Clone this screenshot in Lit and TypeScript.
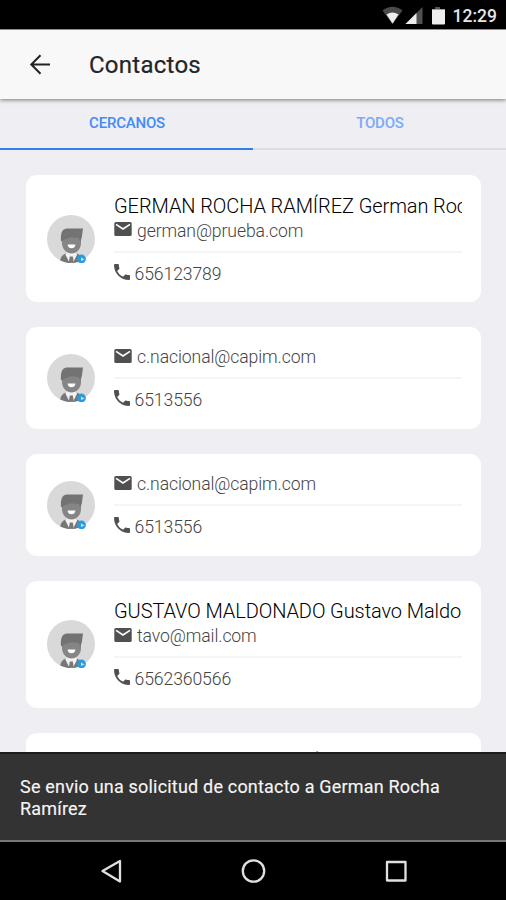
import { LitElement, html, css, svg, nothing } from "lit";
import { customElement, property } from "lit/decorators.js";

interface Contact {
  name?: string;
  email: string;
  phone: string;
}

const german: Contact = { name: "GERMAN ROCHA RAMÍREZ German Roc", email: "german@prueba.com", phone: "656123789" };

const contacts: Contact[] = [
  german,
  { email: "c.nacional@capim.com", phone: "6513556" },
  { email: "c.nacional@capim.com", phone: "6513556" },
  { name: "GUSTAVO MALDONADO Gustavo Maldo", email: "tavo@mail.com", phone: "6562360566" },
  german,
];

const avatar = svg`
  <circle cx="24" cy="24" r="24" fill="#d9d9d9"/>
  <path d="M13.2 45.500C13.800 41.5 16 39.3 20 38h8.500c4 1.300 6.500 3.500 7 7A24 24 0 0 1 13.200 45.500Z" fill="#777"/>
  <path d="M20 36.500h8.500l1.600 3-4 8h-3.700l-4-8Z" fill="#f2f2f2"/>
  <path d="M22.800 41.500h3l1 6.300h-5Z" fill="#777"/>
  <path d="M15 21h19v7c0 6-4.500 10.500-9.500 10.500S15 34 15 28Z" fill="#858585"/>
  <path d="M14 26.500c-.500-7 .500-12.500 5.500-13H36l-1.200 9-1.500 4-1.500-3.500-8.300-.7-7 2.700Z" fill="#737373"/>
  <path d="M20.500 29.500h8c-.5 2.700-2 3.800-4 3.800s-3.500-1.100-4-3.800Z" fill="#fff"/>
  <circle cx="34.500" cy="44" r="4.400" fill="#2b9bdf"/>
  <path d="M34 42.500l3.500 2-3.500 1.500Z" fill="#c5e4f6"/>`;

@customElement("contact-card")
class ContactCard extends LitElement {
  @property({ attribute: false }) contact!: Contact;

  static styles = css`
    :host { display: block; flex: none; }
    .card {
      height: 101.6px;
      box-sizing: border-box;
      padding: 0.5px 19px 0 20.5px;
      background: #fff;
      border-radius: 11px;
      display: flex;
      align-items: center;
      gap: 19.5px;
    }
    .card.named { height: 127.4px; padding-top: 1px; }
    .avatar { width: 48px; height: 48px; flex: none; margin-top: -1px; }
    .info { flex: 1; min-width: 0; }
    .name {
      height: 25.4px;
      line-height: 27px;
      font-size: 20px;
      font-weight: 300;
      color: #000;
      letter-spacing: -0.09px;
      white-space: nowrap;
      overflow: hidden;
    }
    .row {
      display: flex;
      align-items: center;
      font-size: 17.6px;
      font-weight: 300;
      line-height: 24px;
      letter-spacing: -0.1px;
      color: #444;
    }
    .row span { padding-top: 1px; }
    .mail { height: 25px; gap: 5px; }
    .phone { height: 25px; gap: 4.5px; }
    .mail svg { width: 18px; height: 18px; margin-top: -2px; }
    .phone svg { width: 16px; height: 16px; margin-top: -3px; }
    .rule { height: 2px; background: #f5f5f5; margin: 8px 0; }
  `;

  render() {
    const c = this.contact;
    return html`<article class="card ${c.name ? "named" : ""}">
      <svg class="avatar" viewBox="0 0 48 48">${avatar}</svg>
      <div class="info">
        ${c.name ? html`<div class="name">${c.name}</div>` : nothing}
        <div class="row mail">
          <svg viewBox="0 0 18 18"><rect x=".3" y="2" width="17.400" height="14" rx="1.500" fill="#505050"/><path d="M2 4.300 9 9l7-4.700" fill="none" stroke="#fff" stroke-width="1.600"/></svg>
          <span>${c.email}</span>
        </div>
        <div class="rule"></div>
        <div class="row phone">
          <svg viewBox="3 3 18 18"><path fill="#505050" d="M6.620 10.790c1.440 2.830 3.760 5.140 6.590 6.590l2.200-2.200c.27-.27.67-.36 1.020-.24 1.120.37 2.330.57 3.570.57.55 0 1 .45 1 1V20c0 .55-.45 1-1 1C10.610 21 3 13.390 3 4c0-.55.45-1 1-1h3.500c.55 0 1 .45 1 1 0 1.250.2 2.450.57 3.570.11.35.03.74-.25 1.020z"/></svg>
          <span>${c.phone}</span>
        </div>
      </div>
    </article>`;
  }
}

@customElement("app-root")
class AppRoot extends LitElement {
  static styles = css`
    :host {
      display: flex;
      flex-direction: column;
      width: 506px;
      height: 900px;
      overflow: hidden;
      background: #eeeef3;
      font-family: Roboto, sans-serif;
    }
    .status {
      height: 29px;
      flex: none;
      background: #000;
      display: flex;
      justify-content: flex-end;
      align-items: center;
      padding: 3px 9px 0 0;
      box-sizing: border-box;
      color: #e6e6e6;
      font-size: 17.5px;
      font-weight: 500;
    }
    .status svg { width: 64px; height: 22px; margin-right: 7px; }
    header {
      height: 70px;
      flex: none;
      box-sizing: border-box;
      border-top: 1px solid #8c8c8c;
      background: #f8f8f8;
      display: flex;
      align-items: center;
      padding-left: 28px;
      gap: 37px;
      box-shadow: 0 1px 4px rgba(0, 0, 0, 0.5);
      z-index: 1;
    }
    header svg { width: 24px; height: 24px; }
    h1 {
      margin: 0;
      font-size: 24px;
      font-weight: 400;
      letter-spacing: 0.25px;
      color: #252525;
      -webkit-text-stroke: 0.2px #252525;
    }
    .tabs { height: 51px; flex: none; display: flex; }
    .tab {
      flex: 1;
      box-sizing: border-box;
      border-bottom: 2px solid #dcdce2;
      text-align: center;
      font-size: 15px;
      font-weight: 500;
      letter-spacing: -0.2px;
      line-height: 49px;
      padding-left: 1px;
      color: #7baaf8;
    }
    .active { color: #438afa; border-color: #2f80ed; }
    .list {
      flex: 1;
      min-height: 0;
      overflow: hidden;
      padding: 25px 25.5px 0 26px;
      display: flex;
      flex-direction: column;
      gap: 25px;
    }
    .toast {
      flex: none;
      height: 90px;
      box-sizing: border-box;
      background: #333;
      border-top: 2px solid #1c1c1c;
      border-bottom: 2px solid #777;
      padding: 22px 20px 0;
      color: #f5f5f5;
      font-size: 18px;
      letter-spacing: 0.19px;
      line-height: 22px;
      -webkit-text-stroke: 0.15px #f5f5f5;
    }
    nav {
      flex: none;
      height: 58px;
      background: #000;
    }
    nav svg { display: block; width: 506px; height: 58px; }
  `;

  render() {
    return html`
      <div class="status">
        <svg viewBox="0 0 64 22">
          <path d="M.5 5.500Q10.500-2 20.500 5.500L10.500 19Z" fill="#4a4a4a"/>
          <path d="M4.500 9.500Q10.500 5.500 16.500 9.500L10.500 18.500Z" fill="#eee"/>
          <path d="M23.500 19 40.500 2v17Z" fill="#505050"/>
          <path d="M23.500 19 34.500 8v11Z" fill="#eee"/>
          <path d="M53 2h5v2h5v4H50V4h3Z" fill="#555"/>
          <path d="M50 4.500h13V18.500q0 1-1 1H51q-1 0-1-1Z" fill="#eee"/>
        </svg>
        <span>12:29</span>
      </div>
      <header>
        <svg viewBox="0 0 24 24" fill="none" stroke="#222" stroke-width="2"><path d="M22 11.500H3.500M12.500 2.300 3.300 11.500l9.200 9.200"/></svg>
        <h1>Contactos</h1>
      </header>
      <div class="tabs">
        <div class="tab active">CERCANOS</div>
        <div class="tab">TODOS</div>
      </div>
      <main class="list">
        ${contacts.map((c) => html`<contact-card .contact=${c}></contact-card>`)}
      </main>
      <div class="toast">Se envio una solicitud de contacto a German Rocha Ramírez</div>
      <nav>
        <svg viewBox="0 0 506 58" fill="none" stroke="#e0e0e0" stroke-width="2.300" stroke-linejoin="round">
          <path d="M102.500 29 120 19v20.500Z"/>
          <circle cx="253.500" cy="29" r="10.700"/>
          <rect x="387" y="20" width="18.500" height="18.500"/>
        </svg>
      </nav>
    `;
  }
}
